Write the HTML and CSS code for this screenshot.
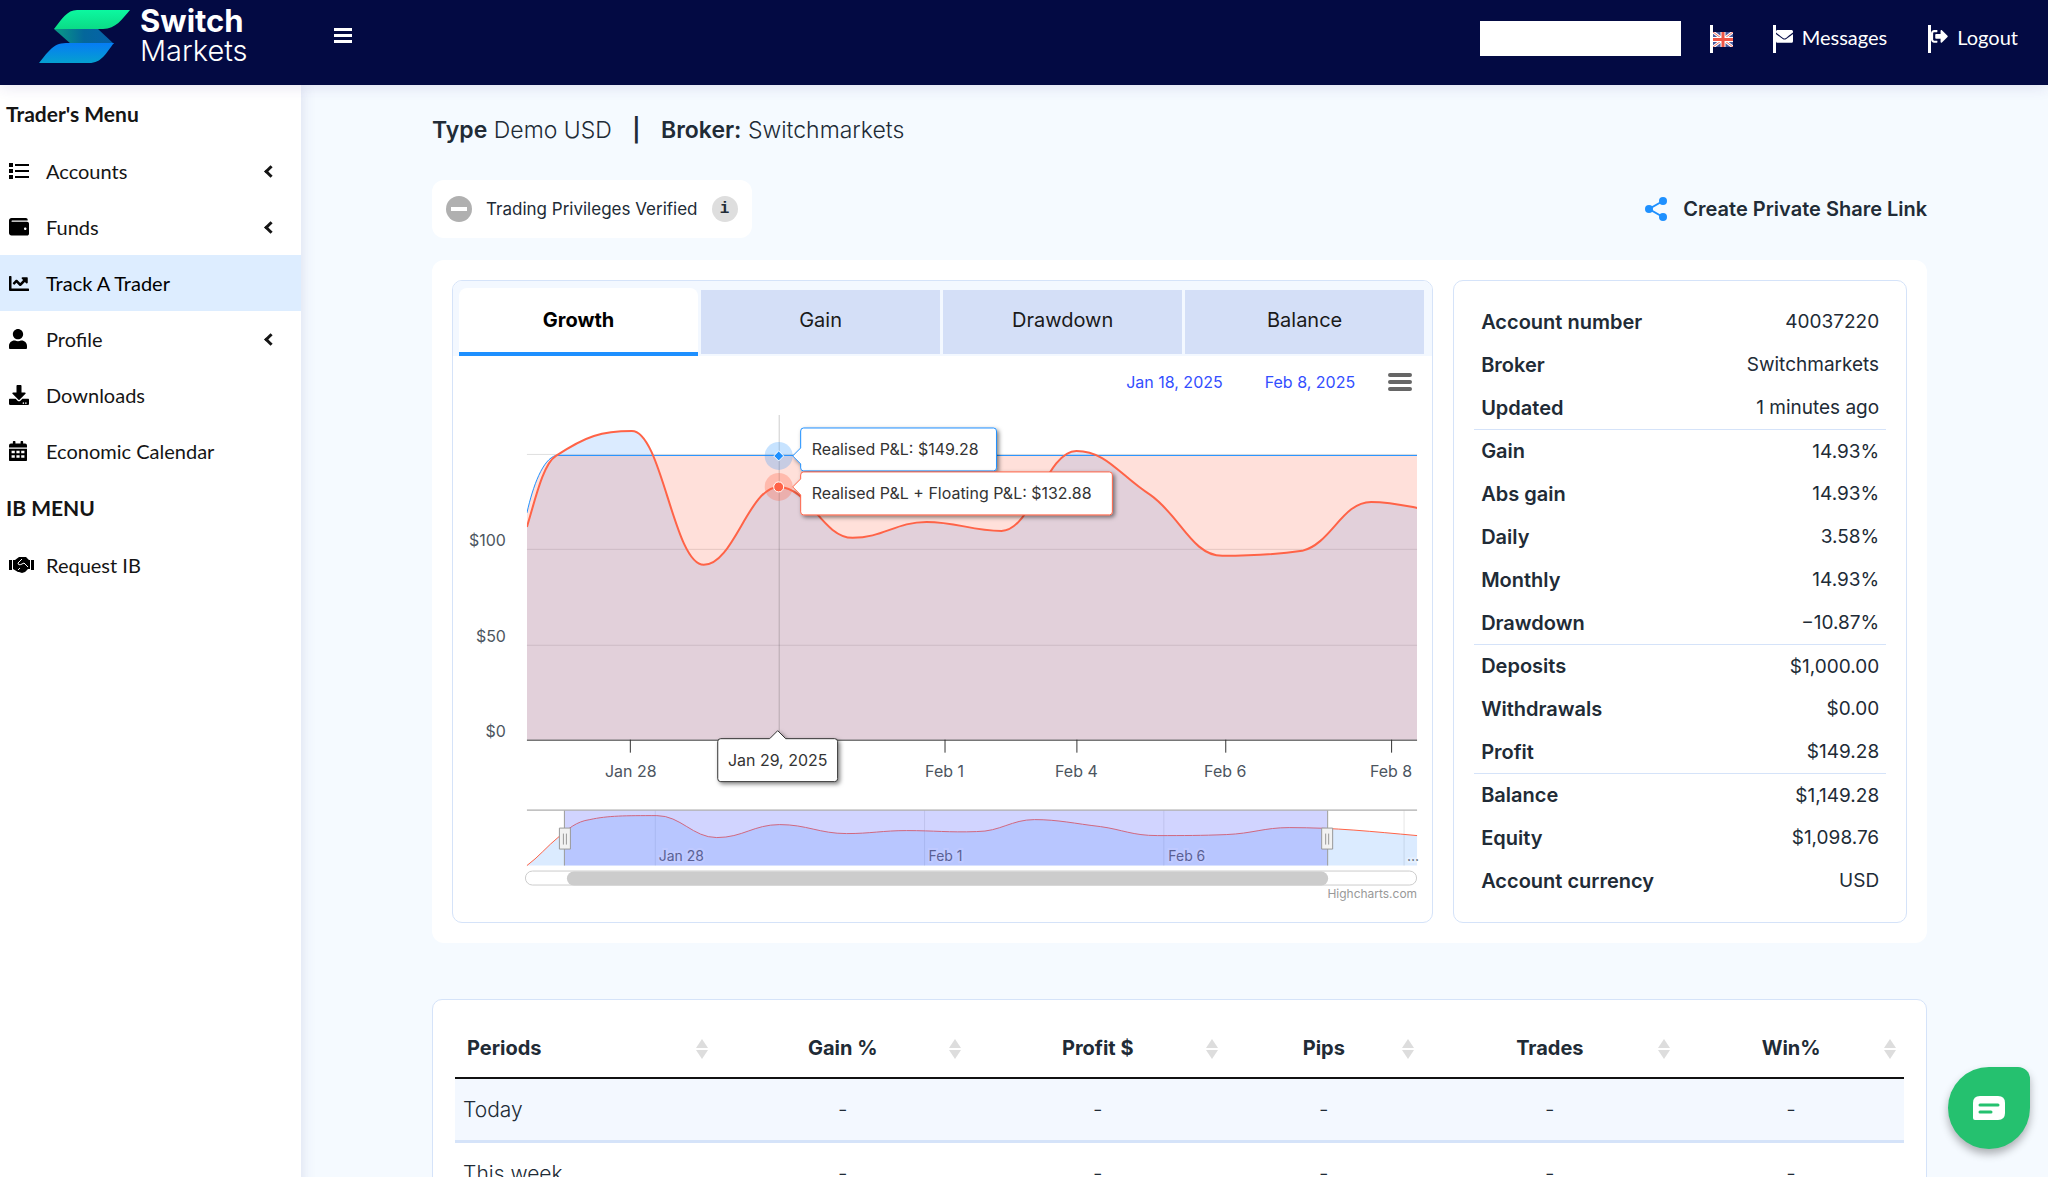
FILE: index.html
```
<!DOCTYPE html>
<html lang="en">
<head>
  <meta charset="utf-8">
  <meta name="viewport" content="width=device-width, initial-scale=1">
  <title>Switch Markets - Track A Trader</title>
  <link rel="stylesheet" href="styles.css">
</head>
<body>
  <header class="topbar">
    <a class="logo" href="#">
      <svg class="logo-mark" viewBox="0 0 91 54" aria-hidden="true">
        <defs>
          <linearGradient id="green" x1="0" y1="0" x2="0" y2="1">
            <stop offset="0" stop-color="#0cf8a0"/>
            <stop offset="1" stop-color="#0bdb86"/>
          </linearGradient>
          <linearGradient id="teal" x1="0" y1="0" x2="1" y2="0">
            <stop offset="0" stop-color="#0a9c84"/>
            <stop offset=".5" stop-color="#04679b"/>
            <stop offset="1" stop-color="#0661ab"/>
          </linearGradient>
          <linearGradient id="blue" x1="0" y1="0" x2="0" y2="1">
            <stop offset="0" stop-color="#067cf5"/>
            <stop offset="1" stop-color="#05a0cf"/>
          </linearGradient>
        </defs>
        <path d="M15 19H59L75 34H32Z" fill="url(#teal)"/>
        <path d="M15 19C23 9 28 0 38 0H91C83 9 77 19 64 19Z" fill="url(#green)"/>
        <path d="M0 53C8 44 13 33 27 33H75C67 43 63 53 50 53Z" fill="url(#blue)"/>
      </svg>
      <span class="logo-text"><b>Switch</b><span>Markets</span></span>
    </a>
    <button class="menu-toggle" type="button" aria-label="Toggle menu">
      <svg viewBox="0 0 18 16"><path d="M0 0h18v3H0zM0 6h18v3H0zM0 12h18v3H0z"/></svg>
    </button>

    <nav class="topbar-nav">
      <input class="topbar-input" type="text" aria-label="Account name">
      <a class="topbar-link flag" href="#" aria-label="English">
        <svg viewBox="0 0 20 15">
          <path fill="#4a5a9c" d="M0 0h20v15H0z"/>
          <path d="M0 0l20 15M20 0L0 15" stroke="#fff" stroke-width="3"/>
          <path d="M0 0l20 15M20 0L0 15" stroke="#f26a5c" stroke-width="1"/>
          <path d="M10 0v15M0 7.500h20" stroke="#fff" stroke-width="5"/>
          <path d="M10 0v15M0 7.500h20" stroke="#f05545" stroke-width="3"/>
        </svg>
      </a>
      <a class="topbar-link messages" href="#">
        <svg viewBox="0 64 512 384"><path d="M502.300 190.800c3.900-3.100 9.700-.2 9.700 4.700V400c0 26.500-21.500 48-48 48H48c-26.500 0-48-21.500-48-48V195.600c0-5 5.700-7.800 9.700-4.700 22.400 17.400 52.100 39.500 154.100 113.600 21.100 15.400 56.700 47.800 92.200 47.600 35.700.3 72-32.800 92.300-47.600 102-74.100 131.600-96.300 154-113.700zM256 320c23.200.4 56.600-29.200 73.400-41.400 132.700-96.300 142.800-104.700 173.400-128.700 5.800-4.500 9.200-11.500 9.200-18.900v-19c0-26.500-21.500-48-48-48H48c-26.500 0-48 21.500-48 48v19c0 7.400 3.400 14.300 9.200 18.900 30.600 23.900 40.700 32.400 173.400 128.700 16.800 12.200 50.200 41.800 73.400 41.400z"/></svg>
        Messages
      </a>
      <a class="topbar-link logout" href="#">
        <svg viewBox="0 64 512 384"><path d="M497 273L329 441c-15 15-41 4.500-41-17v-96H152c-13.300 0-24-10.700-24-24v-96c0-13.300 10.700-24 24-24h136V88c0-21.400 25.900-32 41-17l168 168c9.300 9.400 9.300 24.600 0 34zM192 436v-40c0-6.600-5.400-12-12-12H96c-17.700 0-32-14.300-32-32V160c0-17.700 14.300-32 32-32h84c6.600 0 12-5.400 12-12V76c0-6.600-5.400-12-12-12H96c-53 0-96 43-96 96v192c0 53 43 96 96 96h84c6.600 0 12-5.400 12-12z"/></svg>
        Logout
      </a>
    </nav>
  </header>

  <div class="layout">
    <nav class="sidebar">
      <h2>Trader's Menu</h2>
      <ul>
        <li><a href="#">
          <svg viewBox="0 0 20 16"><path d="M0 0h4v4H0zM0 6h4v4H0zM0 12h4v4H0zM6 1h14v2H6zM6 7h14v2H6zM6 13h14v2H6z"/></svg>
          Accounts <i class="arrow"></i></a></li>
        <li><a href="#">
          <svg viewBox="0 32 512 448"><path d="M461.200 128H80c-8.840 0-16-7.160-16-16s7.160-16 16-16h384c8.840 0 16-7.160 16-16 0-26.510-21.490-48-48-48H64C28.650 32 0 60.650 0 96v320c0 35.350 28.650 64 64 64h397.200c28.020 0 50.800-21.530 50.800-48V176c0-26.470-22.780-48-50.800-48zM416 336c-17.670 0-32-14.330-32-32s14.330-32 32-32 32 14.330 32 32-14.330 32-32 32z"/></svg>
          Funds <i class="arrow"></i></a></li>
        <li class="active"><a href="#">
          <svg viewBox="0 64 512 384"><path d="M496 384H64V80c0-8.840-7.160-16-16-16H16C7.160 64 0 71.160 0 80v336c0 17.670 14.330 32 32 32h464c8.840 0 16-7.160 16-16v-32c0-8.840-7.160-16-16-16zM464 96H345.940c-21.380 0-32.090 25.850-16.970 40.970l32.400 32.400L288 242.750l-73.370-73.370c-12.500-12.500-32.760-12.500-45.250 0l-68.690 68.690c-6.250 6.250-6.250 16.380 0 22.630l22.620 22.620c6.250 6.250 16.380 6.250 22.630 0L192 237.250l73.370 73.370c12.500 12.500 32.760 12.500 45.250 0l96-96 32.400 32.400c15.120 15.120 40.970 4.410 40.970-16.970V112c.01-8.840-7.150-16-15.990-16z"/></svg>
          Track A Trader</a></li>
        <li><a href="#">
          <svg class="narrow" viewBox="0 0 448 512"><path d="M224 256c70.700 0 128-57.300 128-128S294.700 0 224 0 96 57.300 96 128s57.300 128 128 128zm89.600 32h-16.700c-22.200 10.200-46.900 16-72.900 16s-50.600-5.800-72.900-16h-16.700C60.200 288 0 348.200 0 422.400V464c0 26.500 21.500 48 48 48h352c26.500 0 48-21.500 48-48v-41.600c0-74.200-60.200-134.400-134.400-134.400z"/></svg>
          Profile <i class="arrow"></i></a></li>
        <li><a href="#">
          <svg viewBox="0 0 512 512"><path d="M216 0h80c13.300 0 24 10.700 24 24v168h87.700c17.800 0 26.700 21.500 14.100 34.100L269.700 378.300c-7.500 7.500-19.800 7.500-27.300 0L90.100 226.100c-12.600-12.600-3.700-34.100 14.100-34.100H192V24c0-13.300 10.700-24 24-24zm296 376v112c0 13.300-10.700 24-24 24H24c-13.300 0-24-10.700-24-24V376c0-13.300 10.700-24 24-24h146.700l49 49c20.100 20.100 52.500 20.100 72.600 0l49-49H488c13.300 0 24 10.700 24 24zm-124 88c0-11-9-20-20-20s-20 9-20 20 9 20 20 20 20-9 20-20zm64 0c0-11-9-20-20-20s-20 9-20 20 9 20 20 20 20-9 20-20z"/></svg>
          Downloads</a></li>
        <li><a href="#">
          <svg class="narrow" viewBox="0 0 448 512"><path fill-rule="evenodd" d="M0 192h448v272q0 48-48 48H48q-48 0-48-48zM64 240v64h80v-64zM184 240v64h80v-64zM304 240v64h80v-64zM64 356v64h80v-64zM184 356v64h80v-64zM304 356v64h80v-64zM0 160v-48q0-48 48-48h48V16q0-16 16-16h32q16 0 16 16v48h128V16q0-16 16-16h32q16 0 16 16v48h48q48 0 48 48v48z"/></svg>
          Economic Calendar</a></li>
      </ul>
      <h2>IB MENU</h2>
      <ul>
        <li><a href="#">
          <svg class="wide" viewBox="0 0 25 16">
            <path d="M0 3h3v10H0zM22 3h3v10h-3zM4 3h2l4-3h7l3 3h1v9h-2l-3 3-3 1-3-1H9l-5-3z"/>
            <path d="M13 2l-4 4q0 3 4 1l2-1 4 4M9 13l2-2" fill="none" stroke="#fff"/>
          </svg>
          Request IB</a></li>
      </ul>
    </nav>

    <main class="content">
      <h1 class="account-title">
        <b>Type</b> Demo USD <b class="divider">|</b> <b>Broker:</b> Switchmarkets
      </h1>

      <div class="toolbar">
        <div class="privileges">
          <svg viewBox="0 0 26 26" aria-hidden="true"><circle cx="13" cy="13" r="13" fill="#b0b0b0"/><path d="M5 11h16v4H5z" fill="#fff"/></svg>
          <span>Trading Privileges Verified</span>
          <button class="info" type="button">i</button>
        </div>
        <a class="share" href="#">
          <svg viewBox="0 0 22 24" aria-hidden="true"><path d="M18 4L4 12l14 8" fill="none" stroke="#1e90ff" stroke-width="2"/><circle cx="18" cy="4" r="4"/><circle cx="4" cy="12" r="4"/><circle cx="18" cy="20" r="4"/></svg>
          Create Private Share Link
        </a>
      </div>

      <section class="overview">
        <div class="panel chart-panel">
          <div class="tabs" role="tablist">
            <button class="tab selected" type="button" role="tab" aria-selected="true">Growth</button>
            <button class="tab" type="button" role="tab">Gain</button>
            <button class="tab" type="button" role="tab">Drawdown</button>
            <button class="tab" type="button" role="tab">Balance</button>
          </div>

          <div class="range">
            <button type="button">Jan 18, 2025</button>
            <button type="button">Feb 8, 2025</button>
            <button class="export" type="button" aria-label="Chart menu">
              <svg viewBox="0 0 24 18"><path d="M2 2h20M2 9h20M2 16h20" stroke="#666" stroke-width="4" stroke-linecap="round"/></svg>
            </button>
          </div>

          <svg class="chart" viewBox="0 48 980 518">
            <defs>
              <clipPath id="plot"><rect x="74" y="50" width="891" height="335"/></clipPath>
              <filter id="shadow" x="-20%" y="-30%" width="140%" height="170%">
                <feDropShadow dx="2" dy="2" stdDeviation="2" flood-color="#000" flood-opacity=".5"/>
              </filter>
            </defs>

            <!-- Grid -->
            <path d="M74 98.500H965M74 193.500H965M74 289.500H965" stroke="#e0e0e0"/>

            <!-- Areas -->
            <g clip-path="url(#plot)">
              <path class="area-floating" d="M74 171C82 145 90 108 103 100C133 80 149 75 179 75C209 75 221 209 251 209C281 209 296 131 326 131C356 131 370 182 400 182C430 182 444 166 474 166C504 166 519 175 549 175C579 175 594 95 624 95C654 95 668 120 698 139C728 160 740 200 770 200C800 200 822 199 850 195C879 188 890 146 919 146C937 146 950 149 965 152V384H74Z"/>
              <path class="area-realised" d="M74 157C80 130 90 103 103 100H965V384H74Z"/>
              <path d="M326.500 59V384" stroke="#333" stroke-opacity=".25"/>
              <path class="line-realised" d="M74 157C80 130 90 103 103 99.500H965"/>
              <path class="line-floating" d="M74 171C82 145 90 108 103 100C133 80 149 75 179 75C209 75 221 209 251 209C281 209 296 131 326 131C356 131 370 182 400 182C430 182 444 166 474 166C504 166 519 175 549 175C579 175 594 95 624 95C654 95 668 120 698 139C728 160 740 200 770 200C800 200 822 199 850 195C879 188 890 146 919 146C937 146 950 149 965 152"/>
            </g>

            <!-- Axis -->
            <path d="M74 384.500H965M177.500 384V397M492.500 384V397M624.500 384V397M773.500 384V397M939.500 384V397" stroke="#333"/>
            <g class="axis-label" text-anchor="end">
              <text x="53" y="190">$100</text>
              <text x="53" y="286">$50</text>
              <text x="53" y="381">$0</text>
            </g>
            <g class="axis-label" text-anchor="middle">
              <text x="178" y="421">Jan 28</text>
              <text x="492" y="421">Feb 1</text>
              <text x="624" y="421">Feb 4</text>
              <text x="773" y="421">Feb 6</text>
              <text x="939" y="421">Feb 8</text>
            </g>

            <!-- Hovered point -->
            <circle cx="326" cy="100" r="14" fill="#1e90ff" fill-opacity=".25"/>
            <circle cx="326" cy="131" r="14" fill="#ff6347" fill-opacity=".3"/>
            <path d="M326 95l5 5-5 5-5-5z" fill="#1e90ff" stroke="#fff"/>
            <circle cx="326" cy="131" r="5" fill="#ff6347" stroke="#fff"/>

            <!-- Tooltips -->
            <g class="tooltip">
              <path d="M351 72H541q3 0 3 3V112q0 3-3 3H351q-3 0-3-3V108L340 100L348 92V75q0-3 3-3z" stroke="#1e90ff"/>
              <text x="359" y="99">Realised P&amp;L: $149.28</text>
              <path d="M351 116H657q3 0 3 3V156q0 3-3 3H351q-3 0-3-3V139L340 131L348 123V119q0-3 3-3z" stroke="#ff6347"/>
              <text x="359" y="143">Realised P&amp;L + Floating P&amp;L: $132.88</text>
              <path d="M268 383H317L325 375L333 383H382q3 0 3 3V423q0 3-3 3H268q-3 0-3-3V386q0-3 3-3z" stroke="#333"/>
              <text x="325" y="410" text-anchor="middle">Jan 29, 2025</text>
            </g>

            <!-- Navigator -->
            <path d="M202.500 455V510M472 455V510M711.500 455V510M952 455V510" stroke="#e6e6e6"/>
            <path class="area-floating" d="M74 510C85 502 95 490 105 482C116 473 123 466 137 464C155 460 173 460 204 460C228 460 240 482 264 482C290 482 301 469 327 469C354 469 367 478 394 478C418 478 430 475 454 475C482 475 496 477 524 476C548 476 559 464 582 464C606 464 622 468 648 471C670 474 680 480 705 480C733 480 748 480 774 479C800 478 812 472 837 472C884 472 920 476 965 480V510Z"/>
            <path class="line-floating thin" d="M74 510C85 502 95 490 105 482C116 473 123 466 137 464C155 460 173 460 204 460C228 460 240 482 264 482C290 482 301 469 327 469C354 469 367 478 394 478C418 478 430 475 454 475C482 475 496 477 524 476C548 476 559 464 582 464C606 464 622 468 648 471C670 474 680 480 705 480C733 480 748 480 774 479C800 478 812 472 837 472C884 472 920 476 965 480"/>
            <g class="nav-label">
              <text x="206" y="505">Jan 28</text>
              <text x="476" y="505">Feb 1</text>
              <text x="716" y="505">Feb 6</text>
              <text x="955" y="505">…</text>
            </g>
            <path d="M112 455H875V510H112Z" fill="#6670ff" fill-opacity=".3"/>
            <path d="M74 454.500H965M111.500 455V510M875.500 455V510" stroke="#999"/>
            <g fill="#f2f2f2" stroke="#999">
              <path d="M106.500 472.500h11v21h-11zM110.500 478v11M113.500 478v11"/>
              <path d="M869.500 472.500h11v21h-11zM873.500 478v11M876.500 478v11"/>
            </g>

            <!-- Scrollbar -->
            <rect x="72.500" y="515.500" width="892" height="14" rx="7" fill="#fff" stroke="#ccc"/>
            <rect x="114" y="516" width="762" height="14" rx="7" fill="#ccc"/>
            <a href="#"><text class="credits" x="965" y="542" text-anchor="end">Highcharts.com</text></a>
          </svg>
        </div>

        <div class="panel stats-panel">
          <table class="stats">
            <tr><th scope="row">Account number</th><td>40037220</td></tr>
            <tr><th scope="row">Broker</th><td>Switchmarkets</td></tr>
            <tr><th scope="row">Updated</th><td>1 minutes ago</td></tr>
            <tr class="group"><th scope="row">Gain</th><td>14.93%</td></tr>
            <tr><th scope="row">Abs gain</th><td>14.93%</td></tr>
            <tr><th scope="row">Daily</th><td>3.58%</td></tr>
            <tr><th scope="row">Monthly</th><td>14.93%</td></tr>
            <tr><th scope="row">Drawdown</th><td>−10.87%</td></tr>
            <tr class="group"><th scope="row">Deposits</th><td>$1,000.00</td></tr>
            <tr><th scope="row">Withdrawals</th><td>$0.00</td></tr>
            <tr><th scope="row">Profit</th><td>$149.28</td></tr>
            <tr class="group"><th scope="row">Balance</th><td>$1,149.28</td></tr>
            <tr><th scope="row">Equity</th><td>$1,098.76</td></tr>
            <tr><th scope="row">Account currency</th><td>USD</td></tr>
          </table>
        </div>
      </section>

      <section class="periods-card">
        <table class="periods">
          <colgroup>
            <col class="col-period"><col class="col-gain"><col class="col-profit">
            <col class="col-pips"><col class="col-trades"><col class="col-win">
          </colgroup>
          <thead>
            <tr>
              <th scope="col">Periods</th>
              <th scope="col">Gain %</th>
              <th scope="col">Profit $</th>
              <th scope="col">Pips</th>
              <th scope="col">Trades</th>
              <th scope="col">Win%</th>
            </tr>
          </thead>
          <tbody>
            <tr><td>Today</td><td>-</td><td>-</td><td>-</td><td>-</td><td>-</td></tr>
            <tr><td>This week</td><td>-</td><td>-</td><td>-</td><td>-</td><td>-</td></tr>
          </tbody>
        </table>
      </section>
    </main>
  </div>

  <button class="chat" type="button" aria-label="Open chat">
    <svg viewBox="0 0 32 24"><path d="M7 0h18q7 0 7 7v10q0 7-7 7H2q-2 0-2-2V7q0-7 7-7z" fill="#fff"/><path d="M7 9h18M7 16h11" stroke="#25c16f" stroke-width="3" stroke-linecap="round"/></svg>
  </button>
</body>
</html>
```
FILE: styles.css
```
* {
  box-sizing: border-box;
}

body {
  margin: 0;
  background-color: #f5faff;
  font-family: Inter, sans-serif;
  font-size: 20px;
  color: #212b36;
}

a {
  color: inherit;
  text-decoration: none;
}

button {
  border: 0;
  padding: 0;
  background: none;
  font: inherit;
  color: inherit;
  cursor: pointer;
}

svg {
  display: block;
}

/* Top bar */
.topbar {
  position: relative;
  z-index: 1;
  display: flex;
  align-items: flex-start;
  height: 85px;
  background-color: #030a43;
  color: #fff;
  font-family: Lato, sans-serif;
  box-shadow: 0 2px 14px rgba(60, 40, 140, .12);
}
.logo {
  display: flex;
  width: 334px;
  padding: 10px 0 0 39px;
}
.logo-mark {
  width: 91px;
  height: 54px;
}
.logo-text {
  display: flex;
  flex-direction: column;
  margin: -4px 0 0 10px;
  font-family: Inter, sans-serif;
  font-size: 29px;
  font-weight: 300;
  line-height: 30px;
}
.logo-text b {
  font-size: 31px;
  font-weight: 700;
}
.menu-toggle {
  margin-top: 28px;
}
.menu-toggle svg {
  width: 18px;
  height: 16px;
  fill: #fff;
}
.topbar-nav {
  display: flex;
  align-items: center;
  margin-left: auto;
  padding: 21px 30px 0 0;
}
.topbar-input {
  width: 201px;
  height: 35px;
  margin-right: 29px;
  border: 0;
  background-color: #fff;
}
.topbar-link {
  display: flex;
  align-items: center;
  height: 28px;
  padding-bottom: 4px;
  border-left: 3px solid #fff;
  font-size: 20px;
}
.topbar-link svg {
  width: 17px;
  margin-right: 9px;
  fill: #fff;
}
.topbar-link.flag {
  margin-right: 40px;
  padding-bottom: 0;
}
.topbar-link.flag svg {
  width: 20px;
  margin: 2px 0 0;
}
.topbar-link.messages {
  margin-right: 41px;
}

/* Sidebar */
.layout {
  display: flex;
}
.sidebar {
  flex: none;
  width: 301px;
  min-height: calc(100vh - 85px);
  background-color: #fff;
  color: #151515;
  font-family: Lato, sans-serif;
  box-shadow: 0 0 14px rgba(60, 60, 140, .15);
}
.sidebar h2 {
  margin: 0;
  padding-left: 6px;
  font-size: 21px;
  font-weight: 700;
  line-height: 58px;
}
.sidebar ul {
  list-style: none;
  margin: 0;
  padding: 0;
}
.sidebar li a {
  display: grid;
  grid-template-columns: 37px 1fr auto;
  align-items: center;
  height: 56px;
  padding: 0 26px 0 9px;
}
.sidebar li.active {
  background-color: #ddedff;
  color: #000;
}
.sidebar svg {
  width: 20px;
}
.sidebar svg.narrow {
  width: 18px;
}
.sidebar svg.wide {
  width: 25px;
}
.arrow {
  width: 9px;
  height: 9px;
  border: solid #151515;
  border-width: 0 0 3px 3px;
  transform: rotate(45deg);
}

/* Content */
.content {
  flex: 1;
  min-width: 0;
  padding: 28px 5.9% 0 6.4%;
}
.account-title {
  margin: 0;
  font-size: 23px;
  font-weight: 300;
  line-height: 34px;
}
.account-title b {
  font-weight: 600;
}
.account-title .divider {
  margin: 0 14px;
}
.toolbar {
  display: flex;
  align-items: center;
  justify-content: space-between;
  margin: 33px 0 22px;
}
.privileges {
  display: flex;
  align-items: center;
  gap: 14px;
  height: 58px;
  padding: 0 14px;
  border-radius: 12px;
  background-color: #fff;
  font-size: 17px;
}
.privileges svg {
  width: 26px;
  height: 26px;
}
.info {
  width: 26px;
  height: 26px;
  border-radius: 50%;
  background-color: #dedede;
  font: bold 16px "Liberation Mono", monospace;
}
.share {
  display: flex;
  align-items: center;
  gap: 16px;
  font-weight: 600;
}
.share svg {
  width: 22px;
  fill: #1e90ff;
}

.overview {
  display: grid;
  grid-template-columns: 981fr 454fr;
  gap: 20px;
  padding: 20px;
  border-radius: 12px;
  background-color: #fff;
}
.panel {
  border: 1px solid #d5e3f9;
  border-radius: 10px;
  overflow: hidden;
}

/* Chart */
.tabs {
  display: flex;
  gap: 3px;
  padding: 7px 8px 0 6px;
  background-color: #f3f8ff;
}
.tab {
  flex: 1;
  height: 64px;
  margin-top: 2px;
  padding-bottom: 4px;
  background-color: #d4dff7;
  color: #1a1a1a;
}
.tab.selected {
  height: 68px;
  margin-top: 0;
  padding-bottom: 0;
  border-bottom: 4px solid #1e90ff;
  border-radius: 8px 8px 0 0;
  background-color: #fff;
  color: #000;
  font-weight: 700;
}
.range {
  display: flex;
  align-items: center;
  justify-content: flex-end;
  gap: 42px;
  height: 48px;
  padding: 4px 20px 0 0;
  color: #334eff;
  font-size: 16px;
}
.export {
  margin-left: -9px;
}
.export svg {
  width: 24px;
}
.chart {
  width: 100%;
  font-family: Inter, sans-serif;
}
.area-floating {
  fill: #4a9cff;
  fill-opacity: .2;
}
.area-realised {
  fill: #ff6347;
  fill-opacity: .2;
}
.line-floating, .line-realised {
  fill: none;
  stroke: #ff6347;
  stroke-width: 2;
}
.line-realised {
  stroke: #1e90ff;
  stroke-width: 1;
}
.line-floating.thin {
  stroke-width: 1;
}
.axis-label {
  fill: #4c5560;
  font-size: 16px;
}
.tooltip {
  fill: #333;
  font-size: 16px;
}
.tooltip path {
  fill: #fff;
  filter: url(#shadow);
}
.nav-label {
  fill: #555a66;
  font-size: 14px;
  stroke: #fff;
  stroke-opacity: .3;
  stroke-width: 4;
  paint-order: stroke;
}
.credits {
  fill: #999;
  font-size: 12px;
}

/* Account stats */
.stats-panel {
  padding: 19px 20px;
}
.stats {
  width: 100%;
  border-spacing: 0;
}
.stats th, .stats td {
  height: 43px;
  padding: 0 7px;
  text-align: left;
}
.stats th {
  font-weight: 600;
}
.stats td {
  font-size: 19px;
  text-align: right;
}
.stats .group th, .stats .group td {
  border-top: 1px solid #d5e3f9;
}

/* Periods */
.periods-card {
  margin-top: 56px;
  padding: 20px 22px;
  border: 1px solid #d5e3f9;
  border-radius: 10px;
  background-color: #fff;
}
.periods {
  width: 100%;
  table-layout: fixed;
  border-collapse: collapse;
  text-align: center;
}
.col-period { width: 18%; }
.col-gain { width: 17.5%; }
.col-profit { width: 17.7%; }
.col-pips { width: 13.5%; }
.col-trades { width: 17.7%; }
.col-win { width: 15.6%; }
.periods th {
  position: relative;
  height: 58px;
  padding: 0 12px;
  border-bottom: 2px solid #111;
  font-weight: 700;
}
/* sort arrows */
.periods th::before, .periods th::after {
  content: "";
  position: absolute;
  right: 8px;
  border: solid transparent;
  border-width: 0 6px;
}
.periods th::before {
  top: 19px;
  border-bottom: 9px solid #ddd;
}
.periods th::after {
  top: 30px;
  border-top: 9px solid #ddd;
}
.periods td {
  height: 64px;
  padding: 0 8px;
  border-bottom: 3px solid #d5e3f9;
  font-size: 21px;
  font-weight: 300;
}
.periods th:first-child, .periods td:first-child {
  text-align: left;
}
.periods tbody tr:nth-child(odd) {
  background-color: #f3f8ff;
}

/* Chat */
.chat {
  position: fixed;
  right: 18px;
  bottom: 28px;
  display: flex;
  align-items: center;
  justify-content: center;
  width: 82px;
  height: 82px;
  border-radius: 50% 12px 50% 50%;
  background-color: #25c16f;
  box-shadow: 0 5px 8px rgba(0, 0, 0, .3);
}
.chat svg {
  width: 32px;
}
```
